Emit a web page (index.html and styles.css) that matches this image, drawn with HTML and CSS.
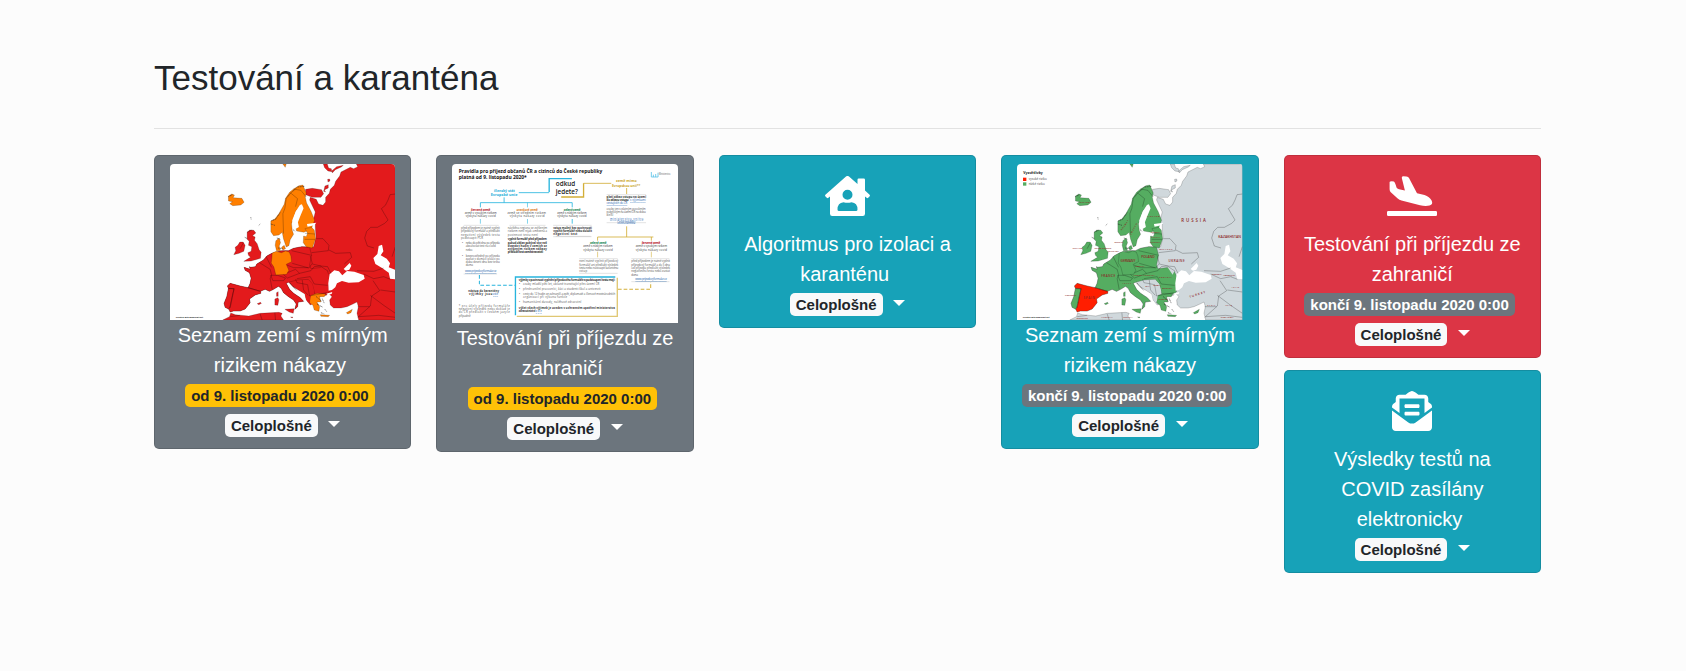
FILE: index.html
```html
<!DOCTYPE html>
<html lang="cs">
<head>
<meta charset="utf-8">
<title>Testování a karanténa</title>
<link rel="stylesheet" href="styles.css">
</head>
<body>
<svg class="defs" aria-hidden="true">
  <symbol id="europe" viewBox="60 42 675 468">
    <rect class="sea" x="60" y="42" width="675" height="468"/>
    <g class="base">
      <path d="M735 42L618 42 622 50 610 56 600 52 572 66 568 78 556 94 552 106 540 118 537 130 526 142 526 156 518 166 505 162 498 148 480 142 478 150 495 186 490 206 480 222 495 222 495 232 497 262 490 290 455 290 430 295 415 302 395 302 365 310 350 318 340 330 320 342 316 350 302 352 298 350 300 358 282 352 285 361 298 368 303 385 300 400 294 413 270 408 240 400 232 408 235 416 230 440 222 460 225 472 238 478 240 486 250 483 270 483 285 477 300 458 298 447 315 435 332 430 330 424 345 418 358 424 370 418 385 409 393 415 400 428 415 440 430 450 438 462 434 478 442 470 444 456 460 454 450 443 430 430 418 418 408 400 414 395 428 410 448 422 464 432 468 450 480 465 490 460 500 440 528 436 535 430 545 440 538 450 540 465 550 474 572 474 590 470 608 462 620 456 624 470 620 490 625 510 735 510z"/>
      <path d="M466 118l20-3 28 4 6 12-8 11-26 0-20-8z"/>
      <path d="M519 42h12l4 12 8 2 2 9-12-2-10-10z M532 88l6-1 1 6-6 3z M524 108l10-4 0 10-12 6 4 6-6-2z M545 62l14-12 20-4-6 5-18 8-9 10z"/>
      <path d="M218 510L238 500 242 489 256 494 296 498 330 490 386 487 396 490 392 498 400 510z"/>
    </g>
    <g class="eu">
      <path d="M291 247l8-7 12 1 6 8-10 8 8 4-2 10 8 10 6 18 6 8-2 18-28 8-22 1 20-12-6-6-2-8 10-4 2-14-10-4 2-12-6-6z"/>
      <path d="M255 292l8-6 6-10 10 0 6 10-4 18-14 6-16 4 6-12z"/>
      <path d="M478 292L455 290 430 295 415 302 395 302 365 310 350 318 340 330 320 342 316 350 302 352 298 350 300 358 282 352 285 361 298 368 303 385 300 400 294 413 330 424 345 418 358 424 370 418 385 409 393 415 400 428 415 440 430 450 438 462 434 478 442 470 444 456 460 454 450 443 430 430 418 418 408 400 418 396 440 390 474 388 486 402 492 425 494 434 528 432 538 425 535 408 540 395 540 382 530 362 515 352 482 356 478 345 484 316z"/>
      <path d="M374 447l9-4 3 6-3 17-9-1z M379 428l5-3 0 14-5 0z M404 478l28-2-3 14-12-4z M421 501l7 0-2 3z M321 461l10-4 3 3-8 4z"/>
      <path d="M235 415L252 416 248 432 240 470 236 478 225 472 222 460 230 440z"/>
    </g>
    <path class="spain" d="M240 400L270 408 294 413 332 424 332 430 315 435 298 447 300 458 285 477 270 483 250 483 240 486 236 478 240 470 248 432 252 416 235 415 232 408z"/>
    <g class="nordic">
      <path d="M458 105l-12 2-16 10-12 10-12 18-4 18-8 14-8 14-12 16-12 6 0 32 8 12 16-2 10-8 4 20 8 24 8-4 4-18 10-16-4-12-2-20 8-22 6-18 8-2 5 10-8 18-8 16 4 20 22 4 22-10 10-26-10-26-14-26-4-18 3-12z"/>
      <path d="M464 236l20-4 8 8 4 26-10 28-18-4-9-12 1-20 8 2 4-10z"/>
      <path d="M377 272l10-8 4 14-4 10 4 14-12 0-4-16z M394 292l8-6 4 10-8 4z"/>
      <path d="M235 138l10-6 8 3-4 8 26 2 7 12-10 8-24 2-9-6 8-6-12-2z M398 42h10l-3 10z"/>
    </g>
    <path class="germany" d="M366 309l12-5 16 4 12-5 11 3 5 12 2 17-16 8 8 18-7 12-32 2-6-24-8-12 2-14z"/>
    <path class="nordic" d="M480 437l20-7 26 2-4 8-14 0 4 16-12 0 8 14-2 14-14-4-4-14-10-8z M510 494l28 2-4 4-22-1z M588 488l18-10-4 10-10 4z"/>
    <path class="outside" d="M440 396L456 390 474 390 486 402 492 424 482 434 479 452 474 458 467 446 464 431 448 420 438 408z M510 350l14-2 8 14-6 12-8-12z"/>
    <path class="sea" d="M538 373L552 361 566 364 576 376 590 363 612 365 640 375 643 386 625 397 595 398 575 393 560 400 555 412 545 420 535 422 534 400z M580 357l18-18 5 8-6 12-10 3z M685 288l10-4 4 20-8 12 18 10 10 14-4 12 20 8v28l-16-2-4-18-20-14-20-12-6-18 12-12z M449 165l6-2 5 12-10 24-7 18 3 14-10 6-8-10-2-16 10-26z M470 222l28-4-6 8-20 4z M528 431l18-5-2 6-12 2z"/>
    <g class="borders">
      <path d="M408 145l-4 30-6 16 2 60M420 128l22 18-6 24M430 117l22 4 16 20 M463 268l32 0M464 250l30 2M498 266l20 0 18 20-2 16-50 6M484 316l-60-14M480 318l6 22-10 14-50-14M536 300l20 10 44-2 4 14-22 20M486 342l26 6 20 2 10 20M410 345l20 8 44 0M412 368l24-10 12 12-36 14-12-10M362 376l20 0 24 8-6 8-32 0zM448 370l34-8 10-12 18-2 24 16M440 386l40-6 12 22 40 4M436 388l4 10 32 6 6 34 52-10M456 390l4 30 14 16M328 338l32 20 4 16-4 12 6 32M348 320l16 32M236 416l16 0-12 58M292 413l38 11"/>
      <path d="M735 132l-16 2-6 16-8 16-12 10 8 14 12 20-10 10-22 12-20 0-12 12-6 20 8 24 20 6M735 290l-10 30M620 362l50 2 30-10M640 372l30 14 30-6 20 8M668 392l20 30-24 16-4 30-38 34M690 420l45 6M660 436l40 30 35 24M622 470l36 0M625 500l60-4 50 6M330 492l6 18M374 488l2 22M240 500l30-4M280 278l-10 18"/>
    </g>
    <g class="coast">
      <path d="M408 145l14-16 20-18 22-2M364 212l12-4 14-20M362 222l12 4M292 246l14-6M284 262l8 4M326 226l4-4M302 202l1 6M235 140l12-6M498 440l16 14M500 462l18 10M516 446l6 14M524 478l6 8M512 488l10 4M428 238l6 6M380 264l10 4M384 294l14 2M420 400l20 22"/>
    </g>
  </symbol>
</svg>

<main class="page">
  <h1 class="page-title">Testování a karanténa</h1>
  <hr class="rule">
  <div class="columns">

    <div class="column">
      <a class="card card-secondary">
        <svg class="picture picture-map map-risk" viewBox="60 42 675 468" preserveAspectRatio="none">
          <use href="#europe" x="60" y="42" width="675" height="468"/>
          <text class="credit" x="77" y="504" textLength="82" lengthAdjust="spacingAndGlyphs">Created with mapchart.net</text>
        </svg>
        <span class="card-title">Seznam zemí s mírným rizikem nákazy&nbsp;</span>
        <span class="line"><span class="badge badge-warning">od 9. listopadu 2020 0:00</span>&nbsp;</span>
        <span class="line"><span class="badge badge-light">Celoplošné</span> <span class="toggle"></span></span>
      </a>
    </div>

    <div class="column">
      <a class="card card-secondary">
        <svg class="picture picture-doc" viewBox="67 42 675 477" preserveAspectRatio="none">
          <rect class="sea" x="66" y="42" width="678" height="477"/>
          <g class="doc-heading">
            <text x="87" y="69" textLength="430" lengthAdjust="spacingAndGlyphs">Pravidla pro příjezd občanů ČR a cizinců do České republiky</text>
            <text x="87" y="88" textLength="204" lengthAdjust="spacingAndGlyphs">platná od 9. listopadu 2020*</text>
          </g>
          <g class="doc-question">
            <text x="378" y="108" textLength="58" lengthAdjust="spacingAndGlyphs">odkud</text>
            <text x="378" y="133" textLength="66" lengthAdjust="spacingAndGlyphs">jedete?</text>
          </g>
          <path class="doc-logo" d="M664 66v15h20V68M670 74v7M677 72v9"/>
          <text class="doc-text" x="687" y="76" textLength="34" lengthAdjust="spacingAndGlyphs">Ministerstvo</text>
          <path class="doc-blue thick" d="M426 86H358V126"/>
          <path class="doc-blue" d="M358 128H267M223 142V158M152 172V158H427V172M427 207v14"/>
          <path class="doc-blue pale" d="M152 207v14M293 158v14M293 207v14"/>
          <path class="doc-gold thick" d="M394 141H461V100"/>
          <path class="doc-gold" d="M461 100H544M590 114V132M590 229V261M503 272V261H670M664 261V272"/>
          <path class="doc-gold pale" d="M503 305V322M664 305V322"/>
          <g class="doc-label blue">
            <text x="193" y="126" textLength="62" lengthAdjust="spacingAndGlyphs">členský stát</text>
            <text x="183" y="138" textLength="80" lengthAdjust="spacingAndGlyphs">Evropské unie</text>
          </g>
          <g class="doc-label gold">
            <text x="558" y="97" textLength="62" lengthAdjust="spacingAndGlyphs">země mimo</text>
            <text x="546" y="110" textLength="85" lengthAdjust="spacingAndGlyphs">Evropskou unii**</text>
          </g>
          <g class="doc-label">
            <text class="red" x="124" y="182" textLength="58">červené země</text>
            <text class="orange" x="260" y="182" textLength="64">oranžové země</text>
            <text class="green" x="402" y="182" textLength="50">zelené země</text>
            <text class="green" x="480" y="281" textLength="50">zelené země</text>
            <text class="red" x="635" y="281" textLength="56">červené země</text>
          </g>
          <g class="doc-text dark">
            <text x="105" y="192" textLength="96">země s vysokým rizikem</text><text x="108" y="202" textLength="90">výskytu nákazy covid</text>
            <text x="233" y="192" textLength="115">země se středním rizikem</text><text x="240" y="202" textLength="104">výskytu nákazy covid</text>
            <text x="382" y="192" textLength="88">země s nízkým rizikem</text><text x="382" y="202" textLength="88">výskytu nákazy covid</text>
            <text x="460" y="292" textLength="88">země s nízkým rizikem</text><text x="460" y="302" textLength="88">výskytu nákazy covid</text>
            <text x="617" y="292" textLength="94">země s vysokým rizikem</text><text x="617" y="302" textLength="94">výskytu nákazy covid</text>
          </g>
          <path class="doc-rule" d="M102 226h105M239 226h108M370 226h115M370 260h115M530 134h118M530 218h118M378 259h104M448 326h115M448 370h115M604 326h114M604 395h114M102 372h100"/>
          <g class="doc-text">
            <text x="94" y="237" textLength="116">před příjezdem je nutné vyplnit</text><text x="94" y="247" textLength="116">příjezdový formulář a předložit</text><text x="94" y="257" textLength="116">negativní výsledek testu</text><text x="94" y="267" textLength="66">podstoupit PCR</text>
            <text x="108" y="281" textLength="102">nebo do pěti dnů po příjezdu</text><text x="108" y="291" textLength="90">absolvovat test na covid</text><text x="108" y="304" textLength="20">nebo</text>
            <text x="108" y="320" textLength="102">bezprostředně po příjezdu</text><text x="108" y="329" textLength="102">zůstat v domácí izolaci po</text><text x="108" y="338" textLength="102">dobu deseti dnů bez testu</text><text x="108" y="347" textLength="22">doma</text><text x="97" y="281">•</text><text x="97" y="320">•</text>
            <text x="234" y="237" textLength="118">návštěva regionů se zvýšeným</text><text x="234" y="247" textLength="118">rizikem není nijak omezena a</text><text x="234" y="257" textLength="90">povinnost testu není</text>
            <text x="448" y="337" textLength="117">není nutné vyplnit příjezdový</text><text x="448" y="347" textLength="117">formulář ani předložit výsledek</text><text x="448" y="357" textLength="117">testu nebo nastoupit karanténu</text><text x="448" y="366" textLength="24">vstup</text>
            <text x="604" y="337" textLength="116">před příjezdem je nutné vyplnit</text><text x="604" y="347" textLength="116">příjezdový formulář a do 5 dnů</text><text x="604" y="357" textLength="116">od příjezdu předložit výsledek</text><text x="604" y="367" textLength="116">negativního testu nebo zůstat</text><text x="604" y="377" textLength="20">doma</text>
            <text x="530" y="179" textLength="117">osoby jen s platným povolením</text><text x="530" y="188" textLength="117">pobytovým na území ČR na dobu</text><text x="530" y="197" textLength="20">delší</text>
            <text x="87" y="470" textLength="153">* pro účely příjezdu formuláře</text><text x="87" y="480" textLength="153">negativní výsledek nebo doklad je</text><text x="87" y="490" textLength="153">do ČR předložit v českém jazyce</text><text x="87" y="500" textLength="36">případně</text>
            <text x="280" y="406" textLength="228">osoby mladší pěti let, občané tranzitující přes území ČR</text><text x="280" y="421" textLength="232">přeshraniční pracovníci, žáci a studenti škol a univerzit</text><text x="280" y="436" textLength="276">cesty do 12 hodin ze zahraničí a zpět, diplomaté a členové mezinárodních</text><text x="280" y="445" textLength="132">organizací při výkonu funkce</text><text x="280" y="459" textLength="174">humanitární důvody, naléhavé zdravotní</text>
            <text x="268" y="406">•</text><text x="268" y="421">•</text><text x="268" y="436">•</text><text x="268" y="459">•</text>
          </g>
          <g class="doc-text dark bold">
            <text x="234" y="271" textLength="117">vyplnit formulář před příjezdem</text><text x="234" y="281" textLength="117">pokud občan pobýval více než</text><text x="234" y="291" textLength="117">dvanáct hodin v zemích se</text><text x="234" y="301" textLength="117">zvýšeným rizikem nákazy</text><text x="234" y="310" textLength="106">předložit test zaměstnavateli</text>
            <text x="370" y="237" textLength="116">vstup možný bez povinnosti</text><text x="370" y="247" textLength="116">vyplnit formulář nebo doložit</text><text x="370" y="256" textLength="72">negativní test</text>
            <text x="530" y="145" textLength="118">platí zákaz vstupu na území</text><text x="530" y="154" textLength="66">do zákazu vstupu</text>
            <text x="116" y="426" textLength="92">nástup do karantény</text><text x="118" y="436" textLength="70">výjimky jsou</text>
            <text x="267" y="392" textLength="288">výjimky z povinnosti vyplnění příjezdového formuláře a podstoupení testu mají:</text>
            <text x="267" y="478" textLength="288">výčet všech výjimek je uveden v ochranném opatření ministerstva</text><text x="267" y="487" textLength="50">zdravotnictví</text>
          </g>
          <g class="doc-text link">
            <text x="600" y="154" textLength="47">s výjimkami</text><text x="530" y="163" textLength="62">cestujících do ČR</text><text x="540" y="209" textLength="100">ministerstvo vnitra</text><text x="562" y="218" textLength="54">České republiky</text>
            <text x="106" y="366" textLength="94">www.prijezdovyformular.cz</text><text x="616" y="391" textLength="94">www.prijezdovyformular.cz</text><text x="190" y="436" textLength="15">zde</text><text x="318" y="487" textLength="18">zde</text>
          </g>
          <path class="doc-blue thick dashed" d="M149 375V406H256"/>
          <path class="doc-gold thick dashed" d="M564 418H662V396"/>
          <path class="doc-blue thick" d="M257 496V381H556"/>
          <path class="doc-gold thick pale" d="M261 499H562V383"/>
        </svg>
        <span class="card-title">Testování při příjezdu ze zahraničí&nbsp;</span>
        <span class="line"><span class="badge badge-warning">od 9. listopadu 2020 0:00</span>&nbsp;</span>
        <span class="line"><span class="badge badge-light">Celoplošné</span> <span class="toggle"></span></span>
      </a>
    </div>

    <div class="column">
      <a class="card card-info">
        <svg class="icon" width="45" height="40" viewBox="0 0 45 40">
          <path fill-rule="evenodd" d="M21 .6a2.200 2.200 0 0 1 3 0L32.500 8V3.700Q32.500 2.500 33.700 2.500H38.800Q40 2.500 40 3.700V14.600L44.600 18.700Q45.300 19.400 44.700 20.200L43.200 21.800Q42.500 22.500 41.600 21.800L40 20.400V37.800Q40 40 37.800 40H7.200Q5 40 5 37.800V20.400L3.400 21.800Q2.500 22.500 1.800 21.800L.3 20.200Q-.3 19.400 .4 18.700zM22.500 13.700a5 5 0 1 0 0 10a5 5 0 0 0 0-10zM18.500 26.200Q12.500 26.700 12.500 33.500Q12.500 35 14 35H31Q32.500 35 32.500 33.500Q32.500 26.700 26.500 26.200Q22.500 27.500 18.500 26.200z"/>
        </svg>
        <span class="card-title">Algoritmus pro izolaci a karanténu&nbsp;</span>
        <span class="line"><span class="badge badge-light">Celoplošné</span> <span class="toggle"></span></span>
      </a>
    </div>

    <div class="column">
      <a class="card card-info">
        <svg class="picture picture-map map-eu" viewBox="60 42 675 468" preserveAspectRatio="none">
          <use href="#europe" x="60" y="42" width="675" height="468"/>
          <text class="legend-title" x="79" y="72" textLength="58" lengthAdjust="spacingAndGlyphs">Vysvětlivky</text>
          <rect x="78" y="83" width="10" height="10" fill="#ff1e00"/>
          <rect x="78" y="97" width="10" height="10" fill="#55ad61"/>
          <text class="legend" x="95" y="91" textLength="54">vysoké riziko</text>
          <text class="legend" x="95" y="105" textLength="48">nízké riziko</text>
          <text class="credit" x="77" y="504" textLength="80" lengthAdjust="spacingAndGlyphs">Created with mapchart.net</text>
          <g class="countries">
            <text class="large" x="552" y="217" textLength="74">RUSSIA</text>
            <text class="medium" x="663" y="265" textLength="68" lengthAdjust="spacingAndGlyphs">KAZAKHSTAN</text>
            <text class="medium" x="514" y="335" textLength="48">UKRAINE</text>
            <text class="medium" x="577" y="444" textLength="50" transform="rotate(-18 577 444)">TURKEY</text>
            <text class="medium" x="312" y="382" textLength="42">FRANCE</text>
            <text class="medium" x="259" y="447" textLength="34">SPAIN</text>
            <text class="medium" x="370" y="335" textLength="44" lengthAdjust="spacingAndGlyphs">GERMANY</text>
            <text class="medium" x="432" y="323" textLength="40" lengthAdjust="spacingAndGlyphs">POLAND</text>
            <text x="487" y="300" textLength="38">BELARUS</text>
            <text x="449" y="202" textLength="38">FINLAND</text>
            <text x="374" y="242" textLength="36" transform="rotate(-55 374 242)">NORWAY</text>
            <text x="402" y="255" textLength="38" transform="rotate(-62 402 255)">SWEDEN</text>
            <text x="246" y="159" textLength="32">ICELAND</text>
            <text x="226" y="298" textLength="30">IRELAND</text>
            <text x="292" y="298" textLength="50" lengthAdjust="spacingAndGlyphs">UNITED KINGDOM</text>
            <text x="352" y="278" textLength="26" lengthAdjust="spacingAndGlyphs">DENMARK</text>
            <text x="332" y="307" textLength="32" lengthAdjust="spacingAndGlyphs">NETHERLANDS</text>
            <text x="376" y="403" textLength="26">ITALY</text>
            <text x="485" y="384" textLength="38">ROMANIA</text>
            <text x="495" y="418" textLength="30" lengthAdjust="spacingAndGlyphs">BULGARIA</text>
            <text x="414" y="352" textLength="28" lengthAdjust="spacingAndGlyphs">CZECHIA</text>
            <text x="408" y="377" textLength="28" lengthAdjust="spacingAndGlyphs">AUSTRIA</text>
            <text x="438" y="378" textLength="34">HUNGARY</text>
            <text x="484" y="451" textLength="28">GREECE</text>
            <text x="204" y="437" textLength="34" lengthAdjust="spacingAndGlyphs">PORTUGAL</text>
            <text x="703" y="414" textLength="22">IRAN</text><text x="684" y="467" textLength="20">IRAQ</text><text x="630" y="467" textLength="24">SYRIA</text>
            <text x="670" y="504" textLength="38" lengthAdjust="spacingAndGlyphs">SAUDI ARABIA</text><text x="312" y="504" textLength="34">ALGERIA</text><text x="378" y="504" textLength="28">TUNISIA</text><text x="238" y="508" textLength="34">MOROCCO</text>
            <text x="645" y="374" textLength="28" lengthAdjust="spacingAndGlyphs">GEORGIA</text><text x="678" y="378" textLength="34" lengthAdjust="spacingAndGlyphs">AZERBAIJAN</text><text x="445" y="411" textLength="12">BIH</text><text x="468" y="408" textLength="22" lengthAdjust="spacingAndGlyphs">SERBIA</text>
            <text x="462" y="250" textLength="26">ESTONIA</text><text x="462" y="264" textLength="26">LATVIA</text><text x="458" y="280" textLength="30" lengthAdjust="spacingAndGlyphs">LITHUANIA</text>
          </g>
        </svg>
        <span class="card-title">Seznam zemí s mírným rizikem nákazy</span>
        <span class="line"><span class="badge badge-secondary">končí 9. listopadu 2020 0:00</span>&nbsp;</span>
        <span class="line"><span class="badge badge-light">Celoplošné</span> <span class="toggle"></span></span>
      </a>
    </div>

    <div class="column">
      <a class="card card-danger">
        <svg class="icon" width="50" height="40" viewBox="0 0 50 40">
          <path d="M3.300 5.500Q4.500 4.900 6.800 5.500Q8 6 9.500 11.500Q10 12.800 12 13.200L17.900 14.500L14.800 2Q14.500 .3 16.100 .2L19.500 .5Q21.300 .8 22 2L30 17.200L37.500 19Q42.500 20.500 44.600 24.500Q46.500 28.500 42.500 29.500Q38.500 30.500 33 29.200L14.500 24.500Q12.300 23.800 10.700 22.400L3.800 16.200Q2.600 15 2.600 13.200V6.200Q2.600 5.600 3.300 5.500zM1.200 35H48.800Q50 35 50 36.200V38.800Q50 40 48.800 40H1.200Q0 40 0 38.800V36.200Q0 35 1.200 35z"/>
        </svg>
        <span class="card-title">Testování při příjezdu ze zahraničí</span>
        <span class="line"><span class="badge badge-secondary">končí 9. listopadu 2020 0:00</span>&nbsp;</span>
        <span class="line"><span class="badge badge-light">Celoplošné</span> <span class="toggle"></span></span>
      </a>
      <a class="card card-info">
        <svg class="icon" width="40" height="40" viewBox="0 0 512 512">
          <path d="M176 216h160c8.840 0 16-7.160 16-16v-16c0-8.840-7.160-16-16-16H176c-8.840 0-16 7.160-16 16v16c0 8.840 7.160 16 16 16zm-16 80c0 8.840 7.160 16 16 16h160c8.840 0 16-7.160 16-16v-16c0-8.840-7.160-16-16-16H176c-8.840 0-16 7.160-16 16v16zm96 121.130c-16.420 0-32.840-5.060-46.860-15.190L0 250.860V464c0 26.510 21.490 48 48 48h416c26.510 0 48-21.490 48-48V250.860L302.860 401.940c-14.020 10.120-30.440 15.190-46.860 15.190zm237.610-254.180c-8.850-6.940-17.240-13.470-29.610-22.810V96c0-26.510-21.490-48-48-48h-77.550c-3.040-2.200-5.870-4.260-9.040-6.560C312.600 29.170 279.200-.35 256 0c-23.200-.35-56.590 29.170-73.410 41.440-3.170 2.300-6 4.360-9.040 6.560H96c-26.510 0-48 21.490-48 48v44.140c-12.370 9.330-20.760 15.870-29.610 22.810A47.995 47.995 0 0 0 0 200.720v10.650l96 69.350V96h320v184.720l96-69.350v-10.650c0-14.740-6.780-28.670-18.390-37.770z"/>
        </svg>
        <span class="card-title">Výsledky testů na COVID zasílány elektronicky&nbsp;</span>
        <span class="line"><span class="badge badge-light">Celoplošné</span> <span class="toggle"></span></span>
      </a>
    </div>

  </div>
</main>
</body>
</html>
```
FILE: styles.css
```css
* { box-sizing: border-box; }
body {
  margin: 0;
  background: #fcfcfc;
  color: #212529;
  font-family: "Liberation Sans", Arial, sans-serif;
  font-size: 20px;
  line-height: 1.5;
}
.defs { position: absolute; width: 0; height: 0; }
.page { width: 1387px; margin: 0 0 0 154px; padding-top: 57px; }
.page-title { margin: 0; font-size: 35px; font-weight: 400; line-height: 42px; }
.rule { margin: 29px 0 26px; border: 0; border-top: 1px solid rgba(0, 0, 0, .1); }
.columns { display: flex; gap: 25px; align-items: flex-start; }
.column { flex: 1 1 0; min-width: 0; display: flex; flex-direction: column; gap: 12px; }
.card {
  display: block;
  padding: 8px 15px;
  border: 1px solid rgba(0, 0, 0, .125);
  border-radius: 5px;
  color: #fff;
  text-align: center;
}
.card-secondary { background: #6c757d; }
.card-info { background: #17a2b8; }
.card-danger { background: #dc3545; }
.card-title, .line { display: block; }
.line { height: 30px; white-space: nowrap; }
.badge {
  display: inline-block;
  margin-top: -1px;
  padding: .25em .4em;
  border-radius: 5px;
  font-size: 15px;
  font-weight: 700;
  line-height: 1;
  vertical-align: 1px;
}
.badge-warning { background: #ffc107; color: #212529; }
.badge-light { background: #f8f9fa; color: #212529; }
.badge-secondary { background: #6c757d; color: #fff; }
.toggle::after {
  content: "";
  display: inline-block;
  margin-left: .255em;
  vertical-align: .255em;
  border-top: .3em solid;
  border-right: .3em solid transparent;
  border-left: .3em solid transparent;
}
.icon { display: block; margin: 12px auto 13px; fill: currentColor; }
.picture { display: block; width: 100%; border-radius: 4px 4px 0 0; }
.picture-map { height: 156px; }
.picture-doc { height: 159px; }

/* maps */
.map-risk { --base: #e31a1c; --eu: #e31a1c; --spain: #e31a1c; --germany: #ff7f00; --nordic: #ff7f00; --outside: #e31a1c; }
.map-eu { --base: #d0d8dc; --eu: #55ad61; --spain: #ff1e00; --germany: #55ad61; --nordic: #55ad61; --outside: #d0d8dc; }
.sea { fill: #fff; }
.base { fill: var(--base); }
.eu { fill: var(--eu); }
.spain { fill: var(--spain); }
.germany { fill: var(--germany); }
.nordic { fill: var(--nordic); }
.outside { fill: var(--outside); }
.base, .eu, .spain, .germany, .nordic { stroke: rgba(0, 0, 0, .45); stroke-width: 1.2; }
.borders { fill: none; stroke: rgba(0, 0, 0, .6); stroke-width: 1.2; }
.coast { fill: none; stroke: #222; stroke-width: 2; stroke-dasharray: 3 2; }
.credit { font: 700 6px "Liberation Sans", sans-serif; fill: #111; }
.legend-title { font: 700 11px "Open Sans", sans-serif; fill: #111; }
.legend { font: 9px "Open Sans", sans-serif; fill: #444; }
.countries { font: 600 6px "Open Sans", sans-serif; fill: #8c2525; }
.countries .medium { font-size: 9px; }
.countries .large { font-size: 13px; }

/* travel rules diagram */
.doc-heading { font: 700 17px "Open Sans", sans-serif; fill: #111; }
.doc-question { font: 600 20px "Open Sans", sans-serif; fill: #222; }
.doc-label { font: 700 9px "Open Sans", sans-serif; }
.doc-label.blue, .doc-label.gold { font-size: 11px; }
.doc-text { font: 8.500px "Open Sans", sans-serif; fill: #555; }
.doc-text.dark { fill: #333; }
.doc-text.bold { font-weight: 700; }
.doc-text.link { fill: #1c62ad; text-decoration: underline; }
.blue { fill: #1badd8; }
.gold { fill: #c9a227; }
.red { fill: #b5121b; }
.orange { fill: #dc7a1e; }
.green { fill: #13854e; }
.doc-blue, .doc-gold, .doc-rule, .doc-logo { fill: none; stroke-width: 2.500; }
.doc-blue { stroke: #27b4dd; }
.doc-gold { stroke: #d3af38; }
.doc-logo { stroke: #5cc3e8; }
.doc-rule { stroke: #aaa; stroke-width: 1; }
.thick { stroke-width: 4; }
.pale { opacity: .7; }
.dashed { stroke-dasharray: 11 6; stroke-width: 3; }
```
